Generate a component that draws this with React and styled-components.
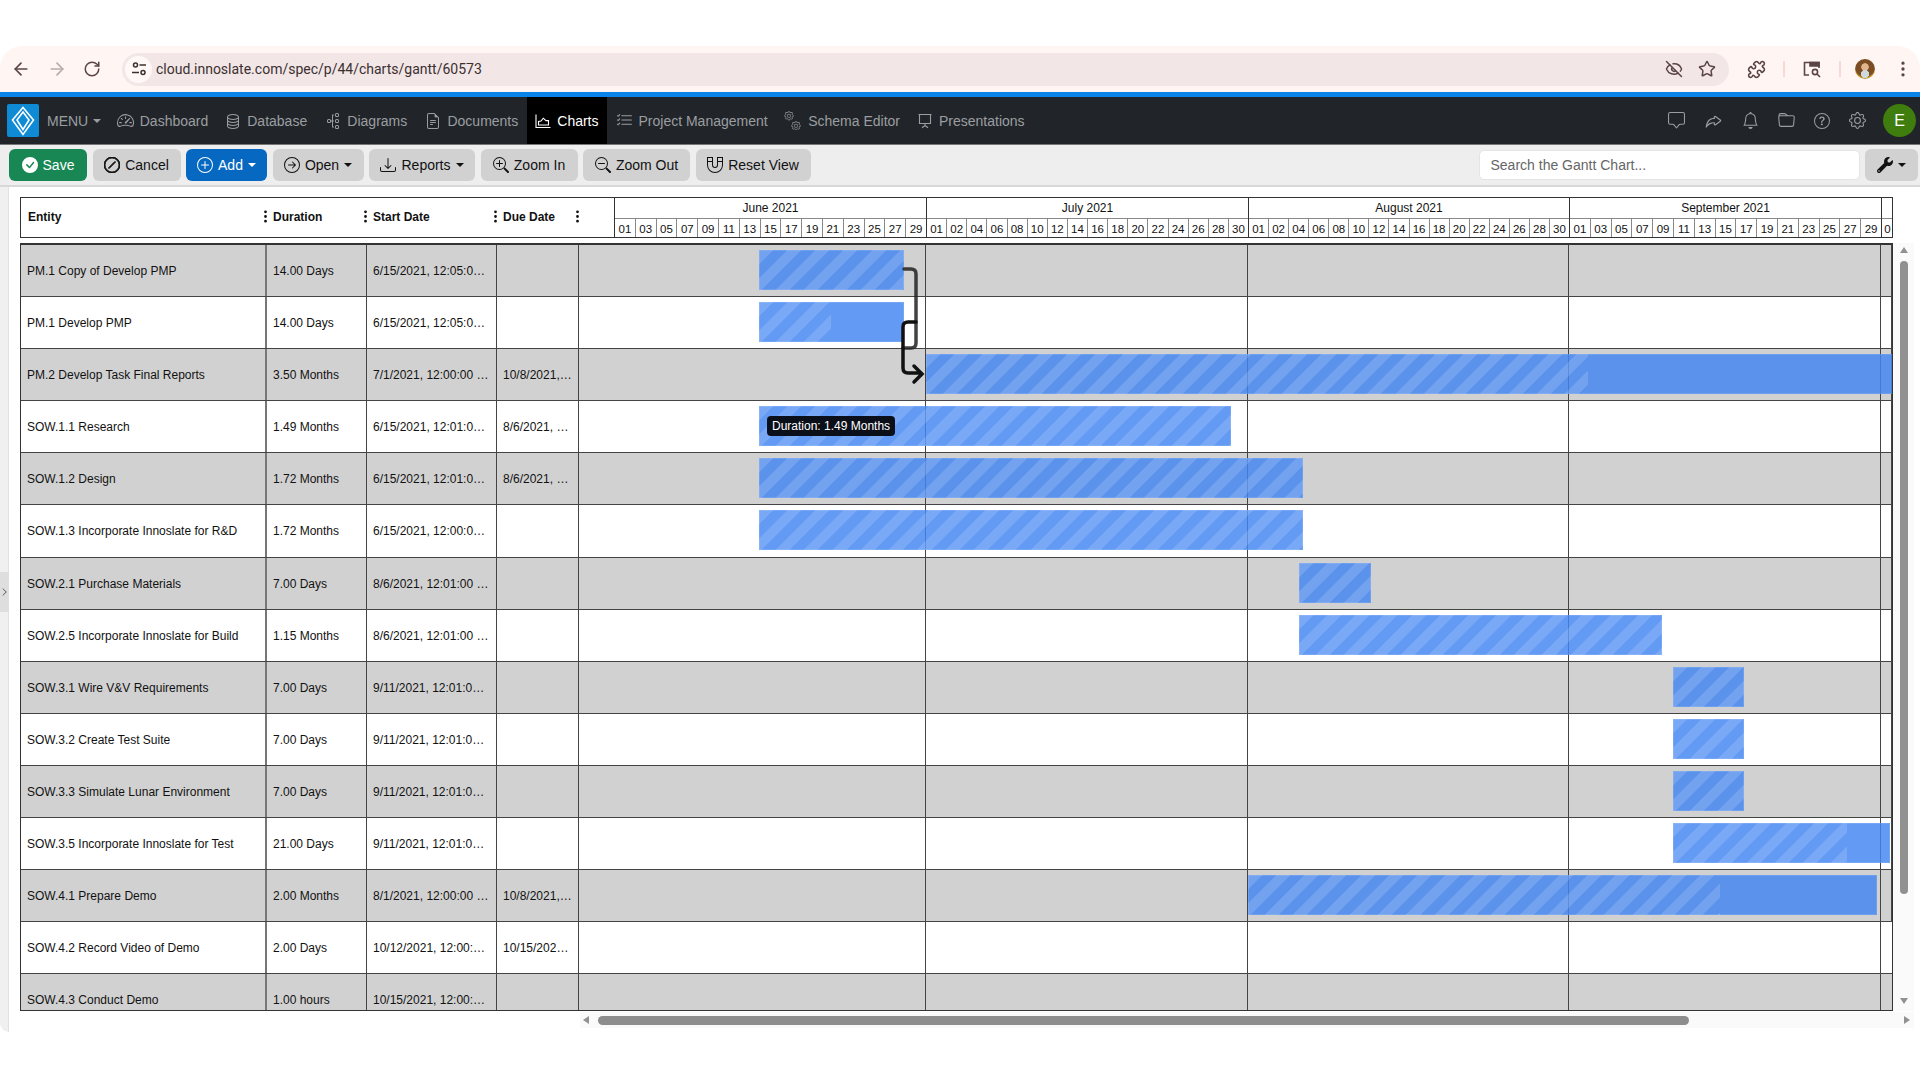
import React from "react";
import styled, { createGlobalStyle } from "styled-components";
import {
    BsSpeedometer2, BsDatabase, BsDiagram3, BsFileEarmarkText, BsListCheck,
    BsChatSquare, BsReply, BsBell, BsFolder, BsQuestionCircle, BsGear, BsCheckCircleFill,
    BsSlashCircle, BsPlusCircle, BsArrowRightCircle, BsDownload, BsZoomIn, BsZoomOut,
    BsMagnet, BsThreeDotsVertical, BsChevronRight,
} from "react-icons/bs";
import { FaWrench } from "react-icons/fa";
import { ArrowLeft, ArrowRight, RotateCw, EyeOff, Star, Puzzle, EllipsisVertical } from "lucide-react";

const MONTHS = [
    { label: "June 2021", width: 312, days: ["01", "03", "05", "07", "09", "11", "13", "15", "17", "19", "21", "23", "25", "27", "29"] },
    { label: "July 2021", width: 322, days: ["01", "02", "04", "06", "08", "10", "12", "14", "16", "18", "20", "22", "24", "26", "28", "30"] },
    { label: "August 2021", width: 321, days: ["01", "02", "04", "06", "08", "10", "12", "14", "16", "18", "20", "22", "24", "26", "28", "30"] },
    { label: "September 2021", width: 312, days: ["01", "03", "05", "07", "09", "11", "13", "15", "17", "19", "21", "23", "25", "27", "29"] },
    { label: "", width: 11, days: ["0"] },
];

// month slices of the row timeline, the first one starts before the header does
const SLICES = [347, 322, 321, 312, 11];

// left / width are px from the start of the timeline, stripe is the striped part of the bar
const ROWS = [
    { name: "PM.1 Copy of Develop PMP", dur: "14.00 Days", start: "6/15/2021, 12:05:00 PM", due: "", bar: [180, 145, 145] },
    { name: "PM.1 Develop PMP", dur: "14.00 Days", start: "6/15/2021, 12:05:00 PM", due: "", bar: [180, 145, 72] },
    { name: "PM.2 Develop Task Final Reports", dur: "3.50 Months", start: "7/1/2021, 12:00:00 PM", due: "10/8/2021, 5:00:00 PM", bar: [347, 980, 662] },
    { name: "SOW.1.1 Research", dur: "1.49 Months", start: "6/15/2021, 12:01:00 PM", due: "8/6/2021, 12:01:00 PM", bar: [180, 472, 472], tip: "Duration: 1.49 Months" },
    { name: "SOW.1.2 Design", dur: "1.72 Months", start: "6/15/2021, 12:01:00 PM", due: "8/6/2021, 12:01:00 PM", bar: [180, 544, 544] },
    { name: "SOW.1.3 Incorporate Innoslate for R&D", dur: "1.72 Months", start: "6/15/2021, 12:00:00 PM", due: "", bar: [180, 544, 544] },
    { name: "SOW.2.1 Purchase Materials", dur: "7.00 Days", start: "8/6/2021, 12:01:00 PM", due: "", bar: [720, 72, 72] },
    { name: "SOW.2.5 Incorporate Innoslate for Build", dur: "1.15 Months", start: "8/6/2021, 12:01:00 PM", due: "", bar: [720, 363, 363] },
    { name: "SOW.3.1 Wire V&V Requirements", dur: "7.00 Days", start: "9/11/2021, 12:01:00 PM", due: "", bar: [1094, 71, 71] },
    { name: "SOW.3.2 Create Test Suite", dur: "7.00 Days", start: "9/11/2021, 12:01:00 PM", due: "", bar: [1094, 71, 71] },
    { name: "SOW.3.3 Simulate Lunar Environment", dur: "7.00 Days", start: "9/11/2021, 12:01:00 PM", due: "", bar: [1094, 71, 71] },
    { name: "SOW.3.5 Incorporate Innoslate for Test", dur: "21.00 Days", start: "9/11/2021, 12:01:00 PM", due: "", bar: [1094, 217, 174] },
    { name: "SOW.4.1 Prepare Demo", dur: "2.00 Months", start: "8/1/2021, 12:00:00 PM", due: "10/8/2021, 5:00:00 PM", bar: [669, 629, 472] },
    { name: "SOW.4.2 Record Video of Demo", dur: "2.00 Days", start: "10/12/2021, 12:00:00 PM", due: "10/15/2021, 5:00:00 PM" },
    { name: "SOW.4.3 Conduct Demo", dur: "1.00 hours", start: "10/15/2021, 12:00:00 PM", due: "" },
];

const ChartIcon = () => (
    <svg width="16" height="16" viewBox="0 0 16 16" fill="none" stroke="currentColor" strokeWidth="1.1">
        <path d="M1 1.5V14.5H15.5" />
        <path d="M3.5 12V8.5L6 8 8.3 5.2 11 7.6 13.5 7.6V12Z" />
    </svg>
);

const ScreenIcon = () => (
    <svg width="16" height="16" viewBox="0 0 16 16" fill="none" stroke="currentColor" strokeWidth="1.1">
        <path d="M2.5 1.5H13.5V10.5H2.5ZM1.5 1.5H14.5M8 10.5V12.5M5 14.8 8 12.5 11 14.8" />
    </svg>
);

const TuneIcon = () => (
    <svg width="16" height="16" viewBox="0 0 16 16" fill="none" stroke="#3c3030" strokeWidth="1.5">
        <circle cx="4.5" cy="4" r="2" />
        <path d="M8.5 4H15M1 11.5H8" />
        <circle cx="12" cy="11.5" r="2" />
    </svg>
);

const TabSearchIcon = () => (
    <svg width="20" height="20" viewBox="0 0 20 20" fill="none" stroke="#5a4544" strokeWidth="1.6">
        <path d="M7 16H2.5V3.5H17V9" />
        <path d="M8 3.5H17V7H8Z" fill="#5a4544" />
        <circle cx="13" cy="13" r="2.6" />
        <path d="M15 15 18 18" />
    </svg>
);

const LogoMark = () => (
    <svg width="24" height="30" viewBox="0 0 24 30" fill="none" stroke="#fff" strokeWidth="1.6">
        <path d="M12 1.5 22.5 14 12 28.5 1.5 14Z" />
        <path d="M12 6 18 14 12 23.5 6 14Z" />
    </svg>
);

function RotatedDiagram() {
    return <BsDiagram3 size={16} style={{ transform: "rotate(-90deg)" }} />;
}

function GearsIcon() {
    return (
        <GearPair>
            <BsGear size={12} />
            <BsGear size={12} />
        </GearPair>
    );
}

// trim nudges the right padding of an item, the menu items are not evenly spaced
const NAV = [
    { label: "Dashboard", icon: <BsSpeedometer2 size={17} /> },
    { label: "Database", icon: <BsDatabase size={16} />, trim: 1.2 },
    { label: "Diagrams", icon: <RotatedDiagram />, trim: 1.2 },
    { label: "Documents", icon: <BsFileEarmarkText size={16} /> },
    { label: "Charts", icon: <ChartIcon />, active: true },
    { label: "Project Management", icon: <BsListCheck size={17} />, trim: -1.5 },
    { label: "Schema Editor", icon: <GearsIcon /> },
    { label: "Presentations", icon: <ScreenIcon /> },
];

const App = () => {
    return (
        <Page>
            <GlobalStyle />
            <BrowserBar>
                <BrowserNav>
                    <ArrowLeft size={20} color="#5a4544" />
                    <ArrowRight size={20} color="#b8acaa" />
                    <RotateCw size={18} color="#5a4544" />
                </BrowserNav>
                <Address>
                    <SiteInfo><TuneIcon /></SiteInfo>
                    <Url>cloud.innoslate.com/spec/p/44/charts/gantt/60573</Url>
                    <EyeOff size={18} color="#5a4544" />
                    <Star size={18} color="#5a4544" />
                </Address>
                <Puzzle size={19} color="#5a4544" style={{ marginLeft: 18 }} />
                <BrowserDivider />
                <TabSearchIcon />
                <BrowserDivider />
                <BrowserAvatar />
                <EllipsisVertical size={20} color="#5a4544" style={{ marginLeft: 18 }} />
            </BrowserBar>
            <AccentLine />
            <NavBar>
                <Logo><LogoMark /></Logo>
                <MenuToggle>MENU<Caret /></MenuToggle>
                {NAV.map((item) => (
                    <NavItem key={item.label} $active={item.active} $trim={item.trim || 0}>
                        {item.icon}
                        {item.label}
                    </NavItem>
                ))}
                <NavActions>
                    <BsChatSquare size={17} />
                    <BsReply size={19} style={{ transform: "scaleX(-1)" }} />
                    <BsBell size={17} />
                    <BsFolder size={17} />
                    <BsQuestionCircle size={16} />
                    <BsGear size={17} />
                    <UserBadge>E</UserBadge>
                </NavActions>
            </NavBar>
            <Toolbar>
                <ToolButton $variant="save" $w={78}><BsCheckCircleFill size={16} />Save</ToolButton>
                <ToolButton $w={88}><BsSlashCircle size={16} stroke="currentColor" strokeWidth="0.9" />Cancel</ToolButton>
                <ToolButton $variant="add" $w={81}><BsPlusCircle size={16} />Add<Caret /></ToolButton>
                <ToolButton $w={91}><BsArrowRightCircle size={16} />Open<Caret /></ToolButton>
                <ToolButton $w={106}><BsDownload size={16} />Reports<Caret /></ToolButton>
                <ToolButton $w={97}><BsZoomIn size={16} />Zoom In</ToolButton>
                <ToolButton $w={107}><BsZoomOut size={16} />Zoom Out</ToolButton>
                <ToolButton $w={115}><BsMagnet size={16} style={{ transform: "rotate(180deg)" }} />Reset View</ToolButton>
                <SearchBox placeholder="Search the Gantt Chart..." />
                <ToolButton $w={53}><FaWrench size={16} /><Caret /></ToolButton>
            </Toolbar>
            <Workspace>
                <SideStrip>
                    <SideToggle><BsChevronRight size={12} /></SideToggle>
                </SideStrip>
                <Panel>
                    <GanttHead>
                        <HeadColumns>
                            {["Entity", "Duration", "Start Date", "Due Date"].map((label) => (
                                <HeadCell key={label}>
                                    {label}
                                    <ColumnMenu><BsThreeDotsVertical size={15} /></ColumnMenu>
                                </HeadCell>
                            ))}
                        </HeadColumns>
                        <HeadMonths>
                            {MONTHS.map((month) => (
                                <Month key={month.label} $w={month.width}>
                                    <MonthName>{month.label}</MonthName>
                                    <DayRow>
                                        {month.days.map((day) => <Day key={day}>{day}</Day>)}
                                    </DayRow>
                                </Month>
                            ))}
                        </HeadMonths>
                    </GanttHead>
                    <BodyRow>
                        <GanttBody>
                            {ROWS.map((row) => (
                                <Row key={row.name}>
                                    <Cell>{row.name}</Cell>
                                    <Cell>{row.dur}</Cell>
                                    <Cell>{row.start}</Cell>
                                    <Cell>{row.due}</Cell>
                                    <Timeline>
                                        {SLICES.map((w, i) => <Slice key={i} $w={w} />)}
                                        {row.bar && (
                                            <Bar style={{ left: row.bar[0], width: row.bar[1] }}>
                                                <Stripes style={{ width: row.bar[2] }} />
                                            </Bar>
                                        )}
                                        {row.tip && <BarTip style={{ left: row.bar[0] + 8 }}>{row.tip}</BarTip>}
                                    </Timeline>
                                </Row>
                            ))}
                            <Links viewBox="0 0 1873 767">
                                <path d="M883 24H890Q895 24 895 29V98Q895 103 890 103H882" stroke="#222" strokeOpacity=".85" />
                                <path d="M895 77H887Q882 77 882 82V123Q882 128 887 128H899M893 121 901 129 893 137" stroke="#111" />
                            </Links>
                        </GanttBody>
                        <VScroll>
                            <ArrowUp />
                            <VThumb />
                            <ArrowDown />
                        </VScroll>
                    </BodyRow>
                    <HScroll>
                        <ArrowLeftTip />
                        <HThumb />
                        <ArrowRightTip />
                    </HScroll>
                </Panel>
            </Workspace>
        </Page>
    );
};

const GlobalStyle = createGlobalStyle`
    html, body {
        margin: 0;
        background: #fff;
        overflow: hidden;
    }
    body {
        font-family: "Liberation Sans", Arial, sans-serif;
    }
    * {
        box-sizing: border-box;
    }
`;

const Page = styled.div`
    width: 1920px;
    height: 1080px;
    padding-top: 46px;
    display: flex;
    flex-direction: column;
`;

const BrowserBar = styled.div`
    height: 46px;
    background: #fff5f3;
    border-radius: 22px 22px 0 0;
    display: flex;
    align-items: center;
`;

const BrowserNav = styled.div`
    display: flex;
    align-items: center;
    gap: 16px;
    padding-left: 11px;
    width: 122px;
`;

const Address = styled.div`
    width: 1607px;
    height: 33px;
    border-radius: 17px;
    background: #f3e6e7;
    display: flex;
    align-items: center;
    gap: 15px;
    padding: 0 13px 0 3px;
`;

const SiteInfo = styled.div`
    width: 27px;
    height: 27px;
    margin-right: -11px;
    border-radius: 50%;
    background: #fff8f7;
    display: flex;
    align-items: center;
    justify-content: center;
`;

const Url = styled.span`
    flex: 1;
    font-family: Roboto, sans-serif;
    font-size: 14px;
    color: #3a3030;
`;

const BrowserDivider = styled.div`
    width: 2px;
    height: 16px;
    margin: 0 17px;
    background: #f6d9d4;
`;

const BrowserAvatar = styled.div`
    width: 20px;
    height: 20px;
    margin-left: -3px;
    border-radius: 50%;
    background: radial-gradient(circle at 50% 75%, #cfd8dc 0 22%, transparent 24%),
        radial-gradient(circle at 50% 40%, #e3b58f 0 22%, #7a4d22 26% 60%, #c89a2e 70%);
`;

const AccentLine = styled.div`
    height: 5px;
    background: #0a84ea;
`;

const NavBar = styled.div`
    height: 48px;
    background: #212529;
    border-bottom: 1px solid #777;
    display: flex;
    align-items: center;
    padding: 0 4px 0 7px;
    color: #9b9ea1;
    font-size: 14px;
`;

const Logo = styled.div`
    width: 32px;
    height: 33px;
    background: #0f8bd6;
    border-radius: 2px;
    display: flex;
    align-items: center;
    justify-content: center;
`;

const Caret = styled.span`
    display: inline-block;
    width: 0;
    height: 0;
    margin-left: 5px;
    border-left: 4px solid transparent;
    border-right: 4px solid transparent;
    border-top: 4px solid currentColor;
`;

const MenuToggle = styled.div`
    display: flex;
    align-items: center;
    margin-left: 8px;
    margin-right: 7px;
`;

const NavItem = styled.div`
    height: 47px;
    display: flex;
    align-items: center;
    gap: 6px;
    padding: 0 ${(props) => 8.5 + props.$trim}px 0 8.5px;
    color: ${(props) => (props.$active ? "#fff" : "inherit")};
    background: ${(props) => (props.$active ? "#000" : "transparent")};
`;

const GearPair = styled.span`
    width: 19px;
    height: 19px;
    display: flex;
    flex-direction: column;
    justify-content: space-between;
    svg:last-child {
        align-self: flex-end;
    }
`;

const NavActions = styled.div`
    margin-left: auto;
    display: flex;
    align-items: center;
    gap: 19px;
`;

const UserBadge = styled.div`
    width: 33px;
    height: 33px;
    margin-left: -2px;
    border-radius: 50%;
    background: #3f7d0e;
    color: #fff;
    font-size: 16px;
    display: flex;
    align-items: center;
    justify-content: center;
`;

const Toolbar = styled.div`
    height: 42px;
    background: #eee;
    border-bottom: 2px solid #d8d8d8;
    display: flex;
    align-items: center;
    gap: 5.5px;
    padding: 0 2px 0 9px;
`;

const BUTTON_COLORS = {
    save: ["#198754", "#fff"],
    add: ["#0668c0", "#fff"],
};

const ToolButton = styled.button`
    width: ${(props) => props.$w}px;
    height: 32px;
    flex: none;
    border: 0;
    border-radius: 6px;
    padding: 0;
    display: flex;
    align-items: center;
    justify-content: center;
    gap: 5px;
    font: 14px "Liberation Sans", Arial, sans-serif;
    background: ${(props) => (BUTTON_COLORS[props.$variant] || ["#d1d1d1"])[0]};
    color: ${(props) => (BUTTON_COLORS[props.$variant] || ["", "#111"])[1]};
    ${Caret} {
        margin-left: 0;
    }
`;

const SearchBox = styled.input`
    width: 381px;
    height: 30px;
    margin-left: auto;
    border: 1px solid #e4e4e4;
    border-radius: 5px;
    background: #fff;
    padding: 0 11px;
    font: 14px "Liberation Sans", Arial, sans-serif;
    &::placeholder {
        color: #666;
    }
`;

const Workspace = styled.div`
    height: 845px;
    display: flex;
`;

const SideStrip = styled.div`
    width: 9px;
    flex: none;
    background: #f0f0f0;
    border-right: 1px solid #e2e2e2;
    border-bottom-left-radius: 16px;
    display: flex;
    align-items: center;
    padding-bottom: 36px;
`;

const SideToggle = styled.div`
    width: 9px;
    height: 40px;
    background: #dedede;
    color: #333;
    display: flex;
    align-items: center;
    justify-content: center;
`;

const Panel = styled.div`
    flex: 1;
    padding: 10px 0 0 11px;
`;

const GanttHead = styled.div`
    width: 1873px;
    height: 41px;
    display: grid;
    grid-template-columns: 594px 1fr;
    border: 1px solid #333;
`;

const HeadColumns = styled.div`
    display: grid;
    grid-template-columns: 245px 100px 130px 82px;
    border-right: 1px solid #333;
`;

const HeadCell = styled.div`
    position: relative;
    display: flex;
    align-items: center;
    padding: 0 0 2px 7px;
    font-size: 12px;
    font-weight: 700;
    color: #111;
`;

const ColumnMenu = styled.span`
    position: absolute;
    right: -7px;
    top: 50%;
    height: 15px;
    margin-top: -9px;
`;

const HeadMonths = styled.div`
    display: flex;
    overflow: hidden;
`;

const Month = styled.div`
    width: ${(props) => props.$w}px;
    flex: none;
    display: flex;
    flex-direction: column;
    border-right: 1px solid #333;
    &:last-child {
        border-right: 0;
    }
`;

const MonthName = styled.div`
    height: 21px;
    flex: none;
    border-bottom: 1px solid #888;
    font-size: 12px;
    line-height: 21px;
    text-align: center;
    color: #111;
`;

const DayRow = styled.div`
    flex: 1;
    display: flex;
`;

const Day = styled.div`
    flex: 1 1 0;
    min-width: 0;
    overflow: hidden;
    border-right: 1px solid #888;
    font-size: 11.5px;
    line-height: 20px;
    text-align: center;
    color: #111;
    &:last-child {
        border-right: 0;
    }
`;

const BodyRow = styled.div`
    margin-top: 5px;
    display: flex;
`;

const GanttBody = styled.div`
    position: relative;
    width: 1873px;
    height: 768px;
    overflow: hidden;
    border: 1px solid #333;
    border-top-width: 2px;
`;

const Row = styled.div`
    height: 52.1px;
    display: grid;
    grid-template-columns: 246px 100px 130px 82px 1fr;
    border-bottom: 1px solid #444;
    background: #fff;
    &:nth-child(odd) {
        background: #d1d1d1;
    }
`;

const Cell = styled.div`
    min-width: 0;
    padding: 0 7px 0 6px;
    border-right: 1px solid #444;
    font-size: 12px;
    line-height: 52px;
    white-space: nowrap;
    overflow: hidden;
    text-overflow: ellipsis;
    color: #111;
    &:first-child {
        border-right: 2px solid #777;
    }
    &:nth-child(4) {
        padding-right: 4px;
    }
`;

const Timeline = styled.div`
    position: relative;
    display: flex;
    overflow: hidden;
`;

const Slice = styled.div`
    width: ${(props) => props.$w}px;
    flex: none;
    border-right: 1px solid #444;
    &:last-of-type {
        border-right: 0;
    }
`;

const Bar = styled.div`
    position: absolute;
    top: 5px;
    height: 40px;
    background: rgba(66, 133, 242, 0.83);
    box-shadow: inset 0 0 0 1px rgba(255, 255, 255, 0.12);
`;

const Stripes = styled.div`
    height: 100%;
    background: repeating-linear-gradient(
        135deg,
        rgba(255, 255, 255, 0.15) 0 10px,
        transparent 10px 20px
    );
`;

const BarTip = styled.div`
    position: absolute;
    top: 15px;
    padding: 0 5px;
    height: 20px;
    border-radius: 4px;
    background: #0b0f19;
    color: #fff;
    font-size: 12px;
    line-height: 20px;
    white-space: nowrap;
`;

const Links = styled.svg`
    position: absolute;
    left: 0;
    top: 0;
    width: 1873px;
    height: 767px;
    fill: none;
    stroke-width: 3.5;
    stroke-linecap: round;
    pointer-events: none;
`;

const VScroll = styled.div`
    width: 21px;
    height: 768px;
    background: #fafafa;
    display: flex;
    flex-direction: column;
    align-items: center;
    padding: 4px 0 7px;
`;

const VThumb = styled.div`
    width: 8px;
    height: 633px;
    margin-top: 8px;
    margin-bottom: auto;
    border-radius: 4px;
    background: #919191;
`;

const ArrowUp = styled.div`
    border-left: 4.5px solid transparent;
    border-right: 4.5px solid transparent;
    border-bottom: 6px solid #919191;
`;

const ArrowDown = styled(ArrowUp)`
    border-bottom: 0;
    border-top: 6px solid #919191;
`;

const HScroll = styled.div`
    width: 1334px;
    height: 16px;
    margin-left: 560px;
    margin-top: 1px;
    background: #fafafa;
    display: flex;
    align-items: center;
    padding: 0 4px 0 3px;
`;

const HThumb = styled.div`
    width: 1091px;
    height: 9px;
    margin-left: 9px;
    margin-right: auto;
    border-radius: 5px;
    background: #8d8d8d;
`;

const ArrowLeftTip = styled.div`
    border-top: 4.5px solid transparent;
    border-bottom: 4.5px solid transparent;
    border-right: 6px solid #919191;
`;

const ArrowRightTip = styled.div`
    border-top: 4.5px solid transparent;
    border-bottom: 4.5px solid transparent;
    border-left: 6px solid #919191;
`;

export default App;
